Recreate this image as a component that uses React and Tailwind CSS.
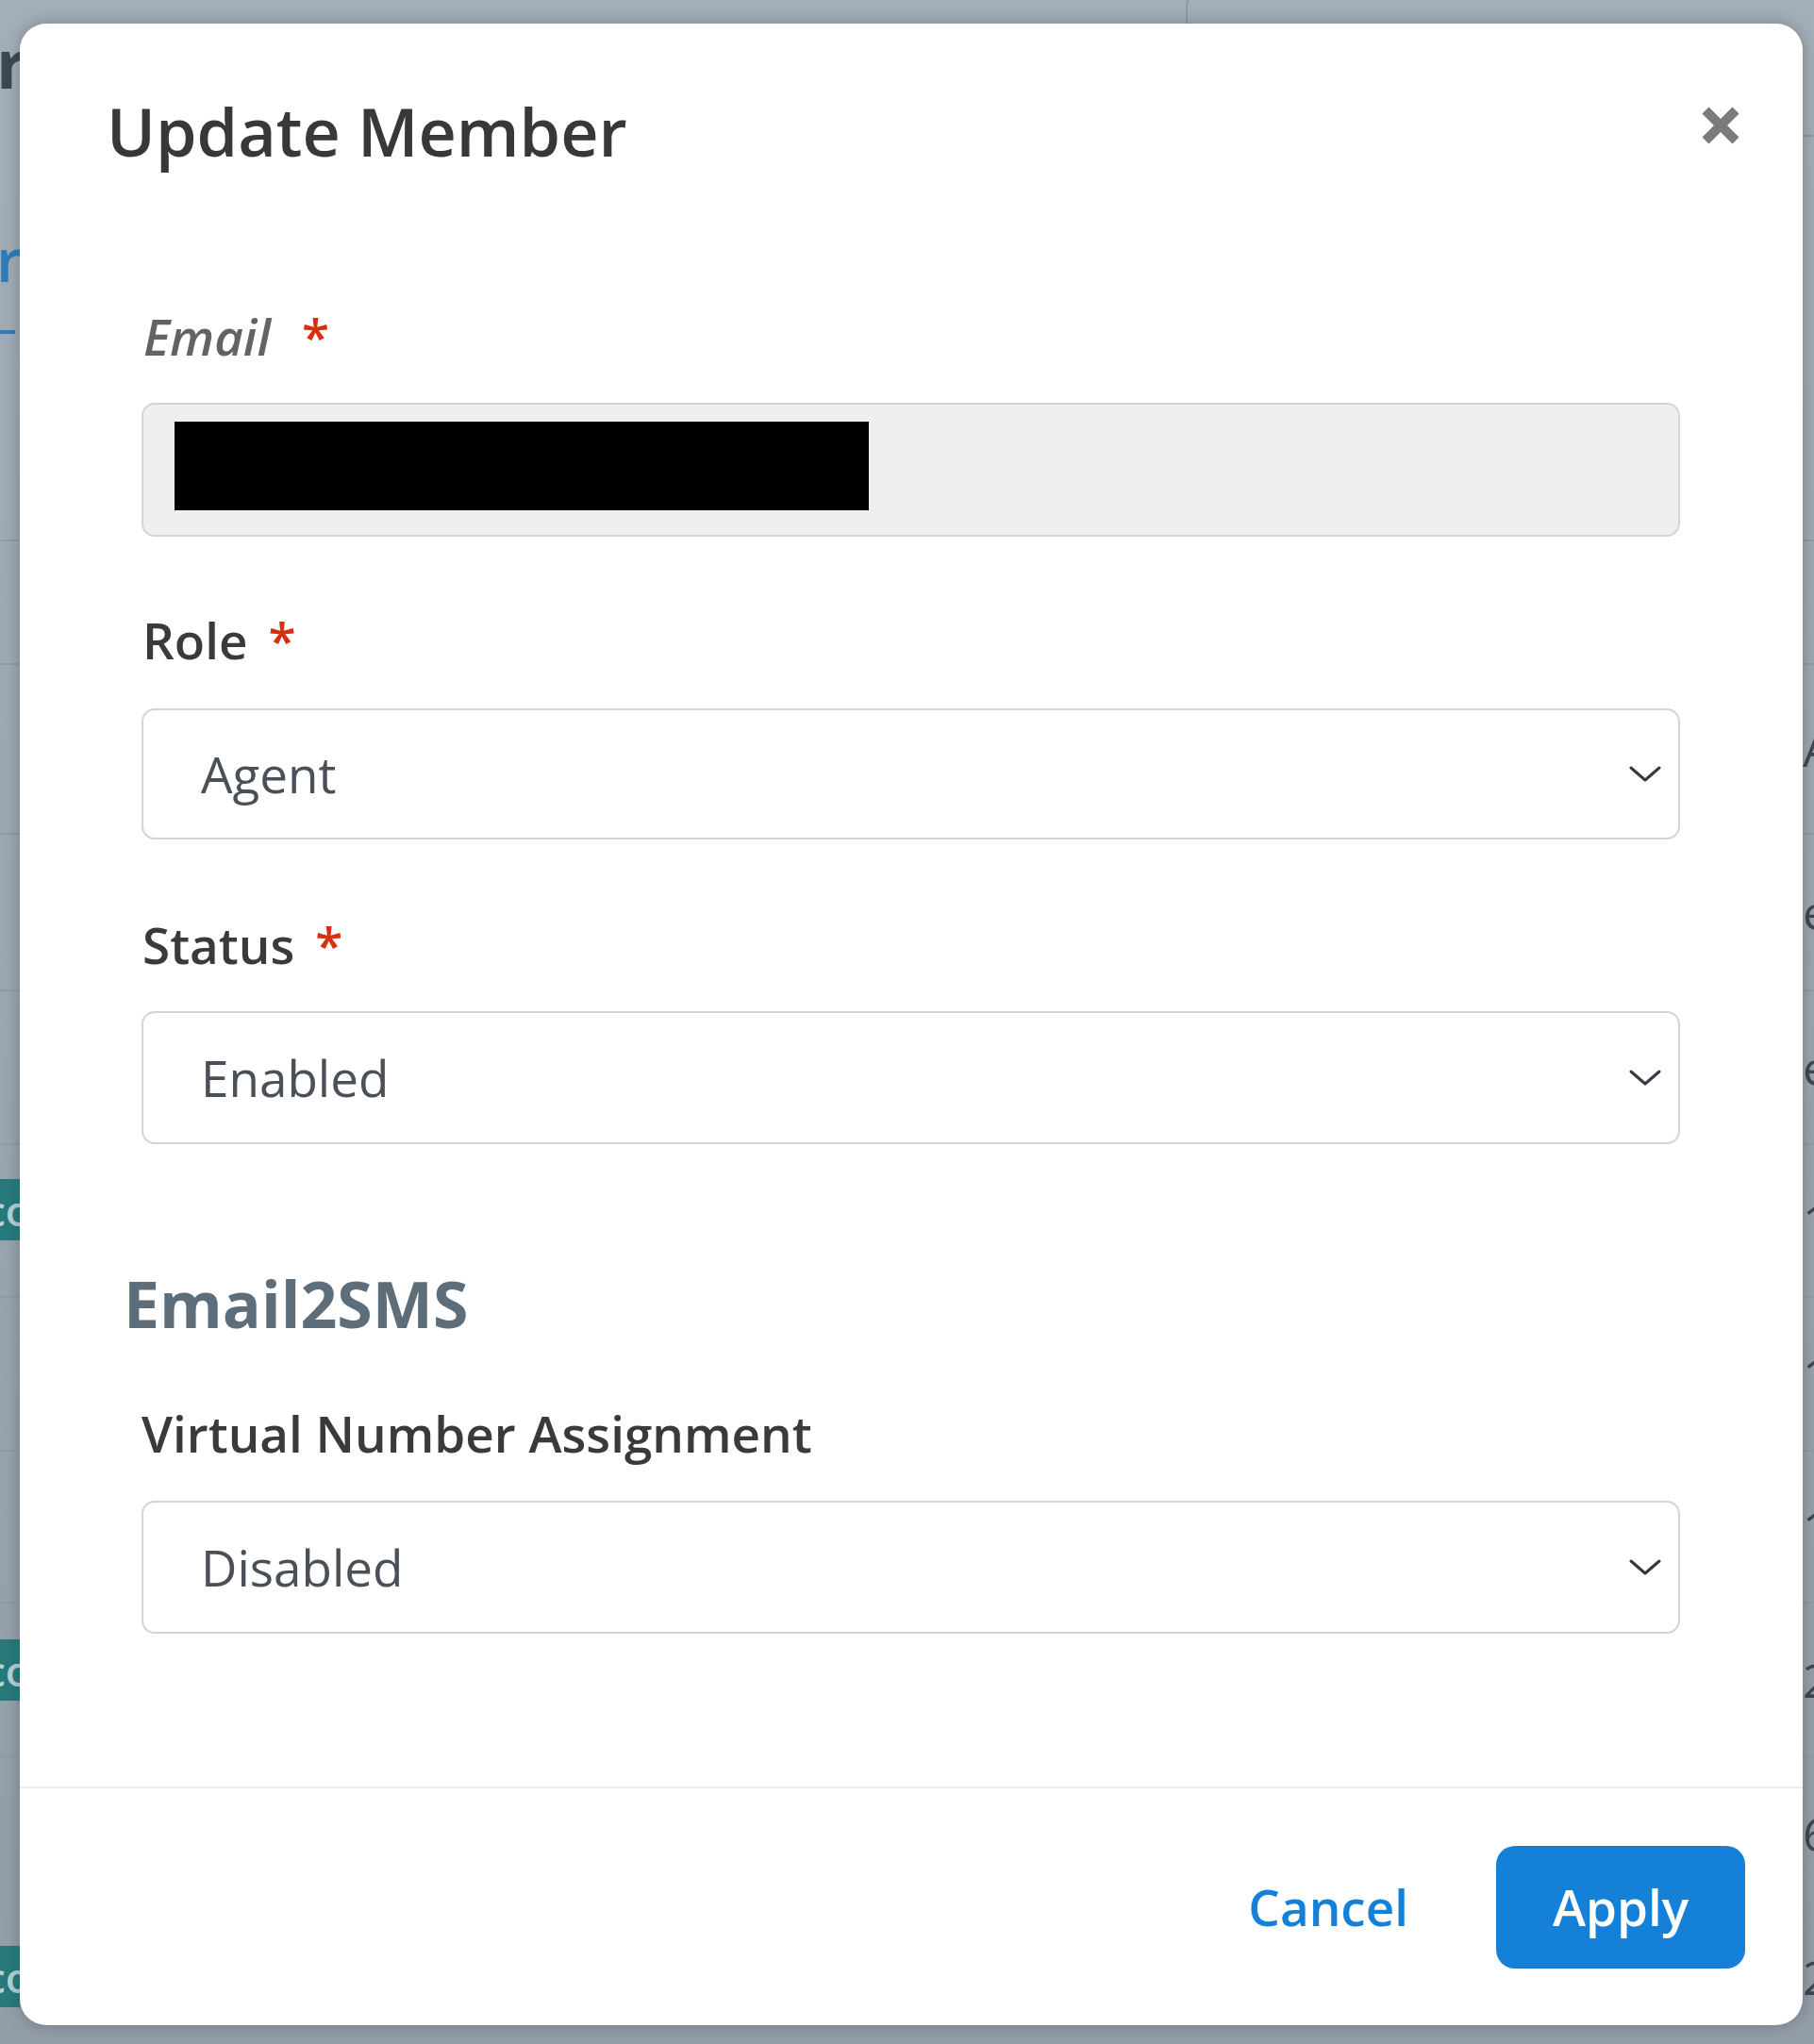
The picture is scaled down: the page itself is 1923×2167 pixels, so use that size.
import React from "react";

const Chevron = () => (
  <svg width="34" height="20" viewBox="0 0 34 20" fill="none" className="shrink-0">
    <polyline points="2,3 17,16 32,3" stroke="#343a40" strokeWidth="3" strokeLinecap="round" strokeLinejoin="round" />
  </svg>
);

const Req = ({ ml = "ml-[22px]" }) => <span className={`${ml} text-[#d8300e] not-italic`}>*</span>;

function Select({ value, h = "h-[140px]" }) {
  return (
    <div className={`${h} w-full rounded-[14px] border-2 border-[#cfd5dc] bg-white flex items-center justify-between pl-[61px] pr-[18px]`}>
      <span className="text-[53px] leading-[72px] text-[#4a5058]">{value}</span>
      <Chevron />
    </div>
  );
}

function BgRow({ h, left, right, last, leftTop = "mt-[37px]" }) {
  return (
    <div className={`${h} w-full flex justify-between ${last ? "" : "border-b-2 border-[#919ca7]"}`}>
      <div className="w-[21px] h-full flex flex-col overflow-hidden">
        {left ? <div className={leftTop}>{left}</div> : null}
      </div>
      <div className="w-[12px] h-full flex items-center overflow-hidden">{right}</div>
    </div>
  );
}

const Badge = () => (
  <div className="h-[65px] w-[21px] bg-[#287a7c] flex items-center overflow-hidden">
    <span className="text-[44px] leading-none font-semibold text-[#b9d3d4] -ml-[16px]">co</span>
  </div>
);

const Glyph = ({ c }) => (
  <span className="text-[50px] leading-none text-[#3e4650]">{c}</span>
);

export default function App() {
  return (
    <div className="relative w-[1923px] h-[2167px] overflow-hidden bg-linear-to-b from-[#a4afb9] to-[#939ea8] font-['Open_Sans',sans-serif]">
      {/* background page (dimmed) */}
      <div className="flex flex-col w-full">
        <div className="h-[574px] w-full flex justify-between border-b-2 border-[#919ca7]">
          <div className="w-[21px] h-full flex flex-col overflow-hidden">
            <span className="mt-[26px] text-[72px] leading-[80px] font-bold text-[#3c4752] -ml-[4px]">r</span>
            <span className="mt-[134px] text-[64px] leading-[70px] font-semibold text-[#2f7cbd] -ml-[4px]">r</span>
            <div className="mt-[40px] h-[4px] w-[16px] bg-[#2f7cbd]" />
          </div>
          <div className="flex-1 flex">
            <div className="ml-[1236px] mt-[-6px] h-[40px] w-[300px] rounded-tl-[12px] border-l-2 border-t-2 border-[#8e99a4]" />
          </div>
          <div className="w-[12px] h-full">
            <div className="h-[145px] border-b-2 border-[#919ca7]" />
          </div>
        </div>
        <BgRow h="h-[131px]" />
        <BgRow h="h-[180px]" right={<Glyph c="A" />} />
        <BgRow h="h-[166px]" right={<Glyph c="e" />} />
        <BgRow h="h-[163px]" right={<Glyph c="e" />} />
        <BgRow h="h-[162px]" left={<Badge />} leftTop="mt-[36px]" right={<Glyph c="1" />} />
        <BgRow h="h-[163px]" right={<Glyph c="1" />} />
        <BgRow h="h-[161px]" right={<Glyph c="1" />} />
        <BgRow h="h-[164px]" left={<Badge />} leftTop="mt-[38px]" right={<Glyph c="2" />} />
        <BgRow h="h-[161px]" right={<Glyph c="6" />} />
        <BgRow h="h-[142px]" left={<Badge />} leftTop="mt-[38px]" right={<Glyph c="2" />} last />
      </div>

      {/* modal */}
      <div className="absolute left-[21px] top-[25px] w-[1890px] h-[2122px] rounded-[28px] bg-white shadow-[0_0_18px_rgba(40,50,60,0.35)] flex flex-col">
        <div className="flex justify-between items-start pl-[92px] pr-[67px] pt-[72px]">
          <h2 className="text-[70px] leading-[84px] font-semibold text-[#38383b]">Update Member</h2>
          <svg width="40" height="40" viewBox="0 0 40 40" className="mt-[16px]">
            <line x1="4" y1="4" x2="36" y2="36" stroke="#7b7b7b" strokeWidth="10" />
            <line x1="36" y1="4" x2="4" y2="36" stroke="#7b7b7b" strokeWidth="10" />
          </svg>
        </div>

        <div className="flex-1 flex flex-col pl-[129px] pr-[130px]">
          <label className="mt-[140px] ml-[2px] text-[53px] leading-[72px] italic font-semibold text-[#636363]">
            Email<Req ml="ml-[33px]" />
          </label>
          <div className="mt-[34px] h-[142px] w-full rounded-[14px] border-2 border-[#cfd5dc] bg-[#efefef] flex items-start pl-[33px] pt-[18px]">
            <div className="w-[736px] h-[94px] bg-black" />
          </div>

          <label className="mt-[74px] ml-[1px] text-[53px] leading-[72px] font-semibold text-[#3a3a3d]">
            Role<Req />
          </label>
          <div className="mt-[36px]">
            <Select value="Agent" h="h-[139px]" />
          </div>

          <label className="mt-[76px] ml-[1px] text-[53px] leading-[72px] font-semibold text-[#3a3a3d]">
            Status<Req />
          </label>
          <div className="mt-[34px]">
            <Select value="Enabled" h="h-[141px]" />
          </div>

          <h3 className="mt-[129px] -ml-[19px] text-[68px] leading-[80px] font-bold text-[#5e6d7a]">Email2SMS</h3>

          <label className="mt-[62px] ml-[0px] text-[53px] leading-[72px] font-semibold text-[#3a3a3d]">
            Virtual Number Assignment
          </label>
          <div className="mt-[35px]">
            <Select value="Disabled" h="h-[141px]" />
          </div>
        </div>

        <div className="border-t-2 border-[#ececec] flex justify-end items-center gap-[93px] pt-[61px] pb-[60px] pr-[61px]">
          <button className="text-[53px] leading-[72px] font-semibold text-[#1580d8]">Cancel</button>
          <button className="w-[264px] h-[130px] rounded-[20px] bg-[#1580d8] text-[53px] leading-[72px] font-semibold text-white">
            Apply
          </button>
        </div>
      </div>
    </div>
  );
}
